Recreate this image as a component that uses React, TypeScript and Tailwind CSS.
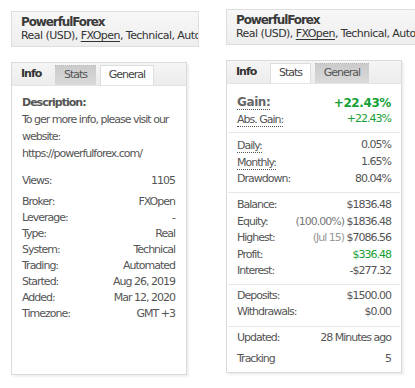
import React from 'react';

type RowProps = {
  label: string;
  value: React.ReactNode;
  dotted?: boolean;
  h?: string;
  valueClass?: string;
};

const Row: React.FC<RowProps> = ({ label, value, dotted, h = 'h-[16px]', valueClass = 'text-[#555]' }) => (
  <div className={`flex items-center justify-between ${h}`}>
    <span className={dotted ? 'border-b border-dotted border-[#555] leading-[13px]' : ''}>{label}</span>
    <span className={valueClass}>{value}</span>
  </div>
);

const Header: React.FC<{ width: string }> = ({ width }) => (
  <div
    className={`${width} h-[36px] shrink-0 overflow-hidden whitespace-nowrap border border-[#dedede] bg-linear-to-b from-[#f7f7f7] to-[#eeeeee] pl-[9px] pt-[4px] text-[#333]`}
  >
    <div className="text-[12px] font-bold leading-[13px] tracking-[-1.1px] text-[#3a3a3a]">PowerfulForex</div>
    <div className="mt-[1px] leading-[11px] tracking-[-0.55px]">
      Real (USD), <span className="underline underline-offset-2">FXOpen</span>, Technical, Automated
    </div>
  </div>
);

const TabStrip: React.FC<{ active: 'Stats' | 'General' }> = ({ active }) => {
  const tab = (name: 'Stats' | 'General', w: string) =>
    active === name ? (
      <div className={`${w} h-[20px] flex items-center justify-center border border-b-0 border-[#dddddd] bg-white text-[#444]`}>
        {name}
      </div>
    ) : (
      <div
        className={`${w} h-[20px] flex items-center justify-center border-t border-dotted border-[#b5b5b5] bg-linear-to-b from-[#cbcbcb] to-[#dadada] text-[#555]`}
      >
        {name}
      </div>
    );
  return (
    <div className="flex h-[23px] items-end border-b border-[#e4e4e4] bg-linear-to-b from-[#f5f5f5] to-[#ececec]">
      <div className="w-[43px] self-center pl-[9px] font-bold text-[#333]">Info</div>
      <div className="flex items-end gap-[4px]">
        {tab('Stats', 'w-[41px]')}
        {tab('General', 'w-[54px]')}
      </div>
    </div>
  );
};

const Sep = () => <div className="mx-[1px] h-px bg-[#e6e6e6]" />;

export default function App() {
  return (
    <div className="flex h-[388px] w-[415px] overflow-hidden bg-white font-['DejaVu_Sans',sans-serif] text-[11px] tracking-[-1px] text-[#555]">
      {/* Left: General tab */}
      <div className="flex w-[199px] shrink-0 flex-col pl-[11px] pt-[11px]">
        <Header width="w-[188px]" />
        <div className="mt-[15px] h-[313px] w-[176px] border border-[#dadada] bg-white shadow-[2px_2px_2px_rgba(0,0,0,0.07)]">
          <TabStrip active="General" />
          <div className="pl-[10px] pr-[11px] pt-[8px]">
            <div className="leading-[17px]">
              <div className="font-bold">Description:</div>
              <div>To ger more info, please visit our</div>
              <div>website:</div>
              <div>https://powerfulforex.com/</div>
            </div>
            <div className="mt-[11px]">
              <Row label="Views:" value="1105" />
            </div>
            <div className="mt-[5px]">
              <Row label="Broker:" value="FXOpen" />
              <Row label="Leverage:" value="-" />
              <Row label="Type:" value="Real" />
              <Row label="System:" value="Technical" />
              <Row label="Trading:" value="Automated" />
              <Row label="Started:" value="Aug 26, 2019" />
              <Row label="Added:" value="Mar 12, 2020" />
              <Row label="Timezone:" value="GMT +3" />
            </div>
          </div>
        </div>
      </div>

      {/* Right: Stats tab */}
      <div className="flex flex-col pl-[27px] pt-[9px]">
        <Header width="w-[220px]" />
        <div className="mt-[15px] h-[313px] w-[176px] border border-[#dadada] bg-white shadow-[2px_2px_2px_rgba(0,0,0,0.07)]">
          <TabStrip active="Stats" />
          <div className="px-[10px] pt-[10px] pb-[4px]">
            <div className="flex h-[17px] items-center justify-between">
              <span className="border-b border-dotted border-[#555] text-[12px] font-bold leading-[14px] tracking-[-0.4px] text-[#666]">
                Gain:
              </span>
              <span className="text-[12px] font-bold tracking-[-0.4px] text-[#16a035]">+22.43%</span>
            </div>
            <Row label="Abs. Gain:" value="+22.43%" dotted h="h-[17px]" valueClass="text-[#16a035]" />
          </div>
          <Sep />
          <div className="px-[10px] pt-[4px] pb-[4px]">
            <Row label="Daily:" value="0.05%" dotted h="h-[17px]" />
            <Row label="Monthly:" value="1.65%" dotted h="h-[17px]" />
            <Row label="Drawdown:" value="80.04%" h="h-[17px]" />
          </div>
          <Sep />
          <div className="px-[10px] pt-[4px] pb-[4px]">
            <Row label="Balance:" value="$1836.48" h="h-[16.5px]" />
            <Row
              label="Equity:"
              value={
                <>
                  <span className="text-[#777]">(100.00%)</span> $1836.48
                </>
              }
              h="h-[16.5px]"
            />
            <Row
              label="Highest:"
              value={
                <>
                  <span className="text-[#999]">(Jul 15)</span> $7086.56
                </>
              }
              h="h-[16.5px]"
            />
            <Row label="Profit:" value="$336.48" h="h-[16.5px]" valueClass="text-[#16a035]" />
            <Row label="Interest:" value="-$277.32" h="h-[16.5px]" />
          </div>
          <Sep />
          <div className="px-[10px] pt-[4px] pb-[5px]">
            <Row label="Deposits:" value="$1500.00" />
            <Row label="Withdrawals:" value="$0.00" />
          </div>
          <Sep />
          <div className="px-[10px] pt-[4px]">
            <Row label="Updated:" value="28 Minutes ago" />
            <div className="mt-[5px]">
              <Row label="Tracking" value="5" />
            </div>
          </div>
        </div>
      </div>
    </div>
  );
}
